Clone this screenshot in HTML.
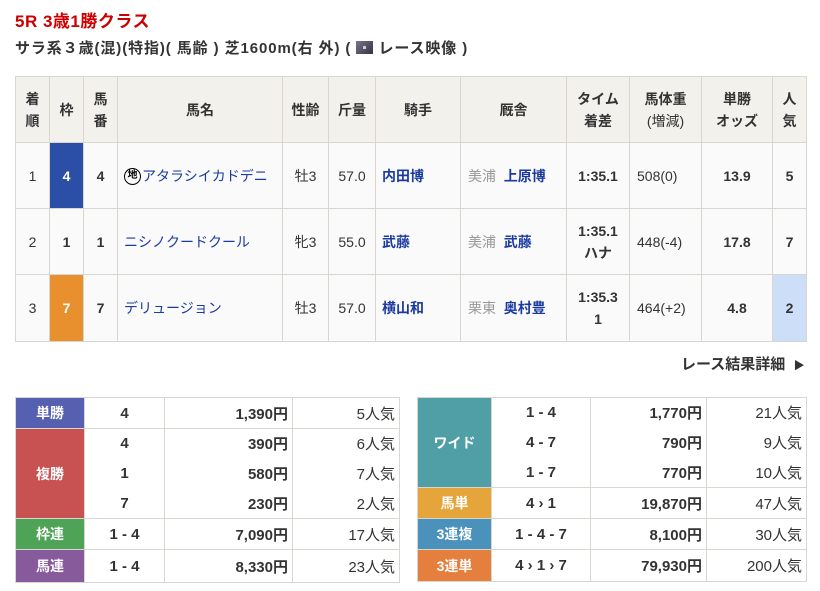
<!DOCTYPE html>
<html><head><meta charset="utf-8"><style>
*{margin:0;padding:0;box-sizing:border-box}
body{width:820px;height:591px;background:#fff;font-family:"Liberation Sans","Noto Sans CJK JP",sans-serif;color:#333;position:relative;overflow:hidden}
h1{position:absolute;left:15px;top:7px;font-size:17px;color:#c00;font-weight:bold;letter-spacing:0.5px}
.sub{position:absolute;left:15px;top:37px;font-size:15px;font-weight:bold;color:#333;letter-spacing:0.9px;white-space:nowrap}
.ico{display:inline-block;width:17px;height:13px;background:linear-gradient(135deg,#778,#334);vertical-align:-1px;position:relative}
.ico:after{content:"";position:absolute;left:7px;top:5px;width:3px;height:3px;background:#ccd}
table{border-collapse:collapse;table-layout:fixed;position:absolute}
td,th{border:1px solid #d8d6cf;font-size:14px}
#m{left:15px;top:76px;width:791px}
#m th{background:#f3f1ec;font-weight:bold;height:66px;line-height:22px;color:#333}
#m td{background:#fafafa;height:66px;text-align:center;line-height:22px}
.b{font-weight:bold}
.lk{color:#1a3aa0;font-weight:bold}
.nm{color:#1a3aa0;text-align:left!important;padding-left:6px;white-space:nowrap}
.gr{color:#999}
.pt td{height:30px;text-align:center;font-weight:bold;background:#fff;font-size:15px}
.pt td.r{text-align:right;padding-right:4px}
.pt td.q{text-align:right;padding-right:4px;font-weight:normal}
.pt td.l{color:#fff;font-weight:bold;font-size:14px}
.more{position:absolute;left:681px;top:353px;font-size:15px;font-weight:bold;color:#333}
.chi{color:#000;border:1.5px solid #000;border-radius:50%;font-size:10px;display:inline-block;width:17px;height:17px;line-height:14px;text-align:center;vertical-align:middle;font-weight:bold;margin-right:1px}
</style></head><body>
<h1>5R 3歳1勝クラス</h1>
<div class="sub">サラ系３歳(混)(特指)( 馬齢 ) 芝1600m(右 外) ( <span class="ico"></span> レース映像 )</div>
<table id="m">
<colgroup><col style="width:34px"><col style="width:34px"><col style="width:34px"><col style="width:165px"><col style="width:46px"><col style="width:47px"><col style="width:85px"><col style="width:106px"><col style="width:63px"><col style="width:72px"><col style="width:71px"><col style="width:34px"></colgroup>
<tr><th>着<br>順</th><th>枠</th><th>馬<br>番</th><th>馬名</th><th>性齢</th><th>斤量</th><th>騎手</th><th>厩舎</th><th>タイム<br>着差</th><th>馬体重<br><span style="font-weight:normal">(増減)</span></th><th>単勝<br>オッズ</th><th>人<br>気</th></tr>
<tr><td>1</td><td style="background:#2b4ea6;color:#fff" class="b">4</td><td class="b">4</td><td class="nm"><span class="chi">地</span>アタラシイカドデニ</td><td>牡3</td><td>57.0</td><td class="lk" style="text-align:left;padding-left:6px">内田博</td><td style="text-align:left;padding-left:7px"><span class="gr">美浦</span>&nbsp; <span class="lk">上原博</span></td><td class="b">1:35.1</td><td style="text-align:left;padding-left:7px">508(0)</td><td class="b">13.9</td><td class="b">5</td></tr>
<tr><td>2</td><td class="b">1</td><td class="b">1</td><td class="nm">ニシノクードクール</td><td>牝3</td><td>55.0</td><td class="lk" style="text-align:left;padding-left:6px">武藤</td><td style="text-align:left;padding-left:7px"><span class="gr">美浦</span>&nbsp; <span class="lk">武藤</span></td><td class="b">1:35.1<br>ハナ</td><td style="text-align:left;padding-left:7px">448(-4)</td><td class="b">17.8</td><td class="b">7</td></tr>
<tr><td style="height:67px">3</td><td style="background:#e8902e;color:#fff" class="b">7</td><td class="b">7</td><td class="nm">デリュージョン</td><td>牡3</td><td>57.0</td><td class="lk" style="text-align:left;padding-left:6px">横山和</td><td style="text-align:left;padding-left:7px"><span class="gr">栗東</span>&nbsp; <span class="lk">奥村豊</span></td><td class="b">1:35.3<br>1</td><td style="text-align:left;padding-left:7px">464(+2)</td><td class="b">4.8</td><td class="b" style="background:#cddff8">2</td></tr>
</table>
<div class="more">レース結果詳細 &nbsp;<span style="font-size:11px">▶</span></div>

<table class="pt" style="left:15px;top:397px;width:384px">
<colgroup><col style="width:69px"><col style="width:80px"><col style="width:128px"><col style="width:107px"></colgroup>
<tr><td class="l" style="background:#5560b0;height:31px">単勝</td><td>4</td><td class="r">1,390円</td><td class="q">5人気</td></tr>
<tr><td class="l" rowspan="3" style="background:#c85252">複勝</td><td style="height:29.6px;border-bottom:none">4</td><td class="r" style="border-bottom:none">390円</td><td class="q" style="border-bottom:none">6人気</td></tr>
<tr><td style="height:29.6px;border-top:none;border-bottom:none">1</td><td class="r" style="border-top:none;border-bottom:none">580円</td><td class="q" style="border-top:none;border-bottom:none">7人気</td></tr>
<tr><td style="height:29.6px;border-top:none">7</td><td class="r" style="border-top:none">230円</td><td class="q" style="border-top:none">2人気</td></tr>
<tr><td class="l" style="background:#4ea356;height:31px">枠連</td><td>1 - 4</td><td class="r">7,090円</td><td class="q">17人気</td></tr>
<tr><td class="l" style="background:#875a9c;height:33px">馬連</td><td>1 - 4</td><td class="r">8,330円</td><td class="q">23人気</td></tr>
</table>

<table class="pt" style="left:417px;top:397px;width:389px">
<colgroup><col style="width:74px"><col style="width:99px"><col style="width:116px"><col style="width:100px"></colgroup>
<tr><td class="l" rowspan="3" style="background:#509ea6">ワイド</td><td style="height:30px;border-bottom:none">1 - 4</td><td class="r" style="border-bottom:none">1,770円</td><td class="q" style="border-bottom:none">21人気</td></tr>
<tr><td style="height:30px;border-top:none;border-bottom:none">4 - 7</td><td class="r" style="border-top:none;border-bottom:none">790円</td><td class="q" style="border-top:none;border-bottom:none">9人気</td></tr>
<tr><td style="height:30px;border-top:none">1 - 7</td><td class="r" style="border-top:none">770円</td><td class="q" style="border-top:none">10人気</td></tr>
<tr><td class="l" style="background:#e6a53a;height:31px">馬単</td><td>4 › 1</td><td class="r">19,870円</td><td class="q">47人気</td></tr>
<tr><td class="l" style="background:#4a92bc;height:31px">3連複</td><td>1 - 4 - 7</td><td class="r">8,100円</td><td class="q">30人気</td></tr>
<tr><td class="l" style="background:#e47f3e;height:32px">3連単</td><td>4 › 1 › 7</td><td class="r">79,930円</td><td class="q">200人気</td></tr>
</table>
</body></html>
